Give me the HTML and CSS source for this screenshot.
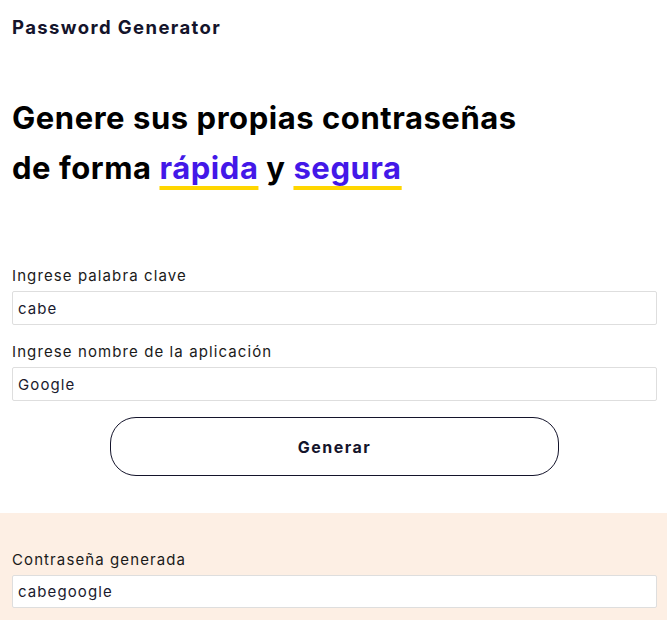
FILE: index.html
```html
<!DOCTYPE html>
<html lang="es">
<head>
<meta charset="utf-8">
<title>Password Generator</title>
<link rel="stylesheet" href="styles.css">
</head>
<body>
<header class="top">
  <h1 class="brand">Password Generator</h1>
</header>
<main class="main">
  <h2 class="hero">Genere sus propias contraseñas<br>de forma <span class="accent">rápida</span> y <span class="accent">segura</span></h2>
  <form class="form">
    <label class="label" for="kw">Ingrese palabra clave</label>
    <input class="field" id="kw" type="text" value="cabe">
    <label class="label label-next" for="app">Ingrese nombre de la aplicación</label>
    <input class="field" id="app" type="text" value="Google">
    <div class="actions">
      <button class="btn" type="button">Generar</button>
    </div>
  </form>
</main>
<section class="result">
  <label class="label" for="out">Contraseña generada</label>
  <input class="field" id="out" type="text" value="cabegoogle">
</section>
</body>
</html>
```
FILE: styles.css
```css
* { box-sizing: border-box; }
html, body { margin: 0; padding: 0; background: #fff; }
body {
  font-family: Inter, "Noto Sans", sans-serif;
  color: #111;
}
.top { padding: 14px 10px 0 12px; }
.brand {
  margin: 0;
  font-size: 18.5px;
  line-height: 26px;
  font-weight: 700;
  color: #14142b;
  letter-spacing: 1.4px;
}
.main { padding: 0 10px 0 12px; }
.hero {
  margin: 53px 0 0;
  font-size: 31px;
  line-height: 50px;
  font-weight: 700;
  color: #000;
  letter-spacing: 0.55px;
}
.accent {
  color: #4318e8;
  text-decoration: underline;
  text-decoration-color: #ffd600;
  text-decoration-thickness: 4px;
  text-underline-offset: 7px;
  text-decoration-skip-ink: none;
}
.form { margin-top: 72px; display: flex; flex-direction: column; }
.label {
  display: block;
  font-size: 15px;
  line-height: 22px;
  color: #1a1a1a;
  margin-bottom: 4px;
  letter-spacing: 1.1px;
}
.label-next { margin-top: 16px; }
.field {
  display: block;
  width: 100%;
  height: 34px;
  border: 1px solid #dedede;
  border-radius: 2px;
  padding: 0 5px;
  font-family: inherit;
  font-size: 15px;
  color: #1a1a2e;
  background: #fff;
  outline: none;
  letter-spacing: 1.1px;
}
.actions { display: flex; justify-content: center; margin-top: 16px; }
.btn {
  width: 449px;
  height: 59px;
  border: 1px solid #14142b;
  border-radius: 26px;
  background: #fff;
  font-family: inherit;
  font-size: 16px;
  font-weight: 700;
  color: #14142b;
  cursor: pointer;
  letter-spacing: 1.5px;
}
.result {
  margin-top: 37px;
  background: #fdefe4;
  padding: 36px 10px 40px 12px;
}
.result .field { height: 33px; }
```
